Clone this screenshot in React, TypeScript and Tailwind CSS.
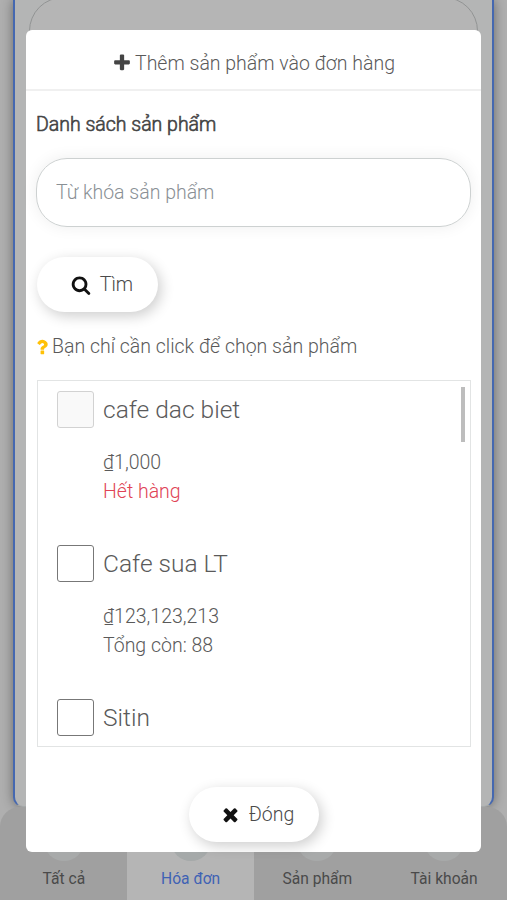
import type { ReactNode } from 'react'
import clsx from 'clsx'

const ICONS = {
  plus: 'M1600 736v192q0 40-28 68t-68 28h-416v416q0 40-28 68t-68 28h-192q-40 0-68-28t-28-68v-416h-416q-40 0-68-28t-28-68v-192q0-40 28-68t68-28h416v-416q0-40 28-68t68-28h192q40 0 68 28t28 68v416h416q40 0 68 28t28 68z',
  search:
    'M1216 832q0-185-131.500-316.500t-316.500-131.500-316.500 131.500-131.500 316.500 131.500 316.500 316.500 131.500 316.500-131.500 131.500-316.500zm512 832q0 52-38 90t-90 38q-54 0-90-38l-343-342q-179 124-399 124-143 0-273.500-55.500t-225-150-150-225-55.500-273.500 55.500-273.500 150-225 225-150 273.500-55.500 273.500 55.500 225 150 150 225 55.500 273.500q0 220-124 399l343 343q37 37 37 90z',
  times:
    'M1490 1322q0 40-28 68l-136 136q-28 28-68 28t-68-28l-294-294-294 294q-28 28-68 28t-68-28l-136-136q-28-28-28-68t28-68l294-294-294-294q-28-28-28-68t28-68l136-136q28-28 68-28t68 28l294 294 294-294q28-28 68-28t68 28l136 136q28 28 28 68t-28 68l-294 294 294 294q28 28 28 68z',
  question:
    'M1088 1256v240q0 16-12 28t-28 12h-240q-16 0-28-12t-12-28v-240q0-16 12-28t28-12h240q16 0 28 12t12 28zm316-600q0 54-15.500 101t-35 76.500-55 59.500-57.500 43.500-61 35.500q-41 23-68.500 65t-27.500 67q0 17-12 32.500t-28 15.500h-240q-15 0-25.500-18.500t-10.500-37.500v-45q0-83 65-156.500t143-108.500q59-27 84-56t25-76q0-42-46.500-74t-107.500-32q-65 0-108 29-35 25-107 115-13 16-31 16-12 0-25-8l-164-125q-13-10-15.500-25t5.500-28q160-266 464-266 80 0 161 31t146 83 106 127.500 41 158.500z',
}

function Icon({ name, className }: { name: keyof typeof ICONS; className?: string }) {
  return (
    <svg viewBox="0 0 1792 1792" fill="currentColor" className={clsx('shrink-0', className)}>
      <path d={ICONS[name]} />
    </svg>
  )
}

const products = [
  { name: 'cafe dac biet', price: '₫1,000', stock: 'Hết hàng', soldOut: true },
  { name: 'Cafe sua LT', price: '₫123,123,213', stock: 'Tổng còn: 88', soldOut: false },
  { name: 'Sitin', soldOut: false },
]

const tabs = [
  { label: 'Tất cả' },
  { label: 'Hóa đơn', active: true },
  { label: 'Sản phẩm' },
  { label: 'Tài khoản' },
]

function PillButton({ className, children }: { className?: string; children: ReactNode }) {
  return (
    <button
      className={clsx(
        'flex h-[55px] items-center justify-center rounded-full bg-white text-[19.5px] font-light text-[#4a4a4a] shadow-[3px_4px_14px_rgba(0,0,0,0.2)]',
        className
      )}
    >
      {children}
    </button>
  )
}

export default function App() {
  return (
    <div className="relative flex h-[900px] w-full flex-col overflow-hidden bg-[#afafaf] font-['Roboto',sans-serif]">
      {/* Page behind the dialog */}
      <div className="mx-[13px] h-[807px] shrink-0 rounded-b-[10px] border-x-2 border-b border-[#4568b0] border-b-[#a5a9a9] bg-[#b4b5b5] px-[14px] shadow-[0_0_12px_rgba(0,0,0,0.4)]">
        <div className="-mt-[3px] h-24 rounded-t-[34px] border border-[#929494] bg-[#b5b5b5]" />
      </div>

      {/* Bottom tabs */}
      <nav className="flex h-[93px] shrink-0 overflow-hidden rounded-t-[20px] bg-[#a0a0a0]">
        {tabs.map((tab) => (
          <div
            key={tab.label}
            className={clsx(
              'flex flex-1 flex-col items-center pl-px text-[15.6px]',
              tab.active ? 'bg-[#b5b5b5] text-[#3f62b4]' : 'text-[#4a4a4a]'
            )}
          >
            <div className={clsx('mt-[14px] h-10 w-10 rounded-full', tab.active ? 'bg-[#a5a9a9]' : 'bg-[#a8aaaa]')} />
            <span className="mt-[6px] leading-6">{tab.label}</span>
          </div>
        ))}
      </nav>

      {/* Dialog */}
      <div className="absolute inset-x-[26px] top-[30px] flex h-[822px] flex-col rounded-md bg-white text-[19.5px] font-light text-[#5a5a5a]">
        <header className="flex h-[61px] shrink-0 items-center justify-center gap-[3px] border-b-2 border-[#f0f0f0] pt-[9px]">
          <Icon name="plus" className="-mt-[3px] h-5 w-5 text-[#444]" />
          <h1>Thêm sản phẩm vào đơn hàng</h1>
        </header>

        <div className="flex flex-col px-[10px]">
          <h2 className="mt-[19px] leading-[30px] text-[#444] [-webkit-text-stroke:0.6px_#444]">Danh sách sản phẩm</h2>
          <input
            placeholder="Từ khóa sản phẩm"
            className="mt-[18px] h-[69px] w-full rounded-[31px] border border-[#cdd1d1] px-[19px] pb-px shadow-[0_0_16px_rgba(0,0,0,0.07)] placeholder:text-[#8a9095]"
          />
          <PillButton className="mt-[30px] ml-px w-[121px] gap-[9px] pl-[9px]">
            <Icon name="search" className="h-5 w-5 text-[#111]" />
            Tìm
          </PillButton>

          <p className="mt-5 flex items-center leading-[30px]">
            <Icon name="question" className="-ml-[4px] h-5 w-5 text-[#ffc107]" />
            Bạn chỉ cần click để chọn sản phẩm
          </p>

          <div className="relative mt-[18px] ml-px h-[367px] overflow-hidden border border-[#e2e4e4] pt-[10px] pl-[19px]">
            {products.map((product) => (
              <div key={product.name} className="flex h-[154px] gap-[9px]">
                <div
                  className={clsx(
                    'h-[37px] w-[37px] shrink-0 rounded-[3px] border',
                    product.soldOut ? 'border-[#d2d2d2] bg-[#f9f9f9]' : 'border-[#777] bg-white'
                  )}
                />
                <div className="leading-[29px]">
                  <div className="mb-5 text-[24.5px] leading-[37px]">{product.name}</div>
                  {product.price && <div>{product.price}</div>}
                  {product.stock && <div className={clsx(product.soldOut && 'text-[#e04355]')}>{product.stock}</div>}
                </div>
              </div>
            ))}
            <div className="absolute top-[6px] right-[5px] h-[55px] w-1 bg-[#bdbdbd]" />
          </div>

          <PillButton className="mt-[40px] w-[130px] gap-[8px] self-center pl-[7px]">
            <Icon name="times" className="h-[21px] w-[21px] text-[#111]" />
            Đóng
          </PillButton>
        </div>
      </div>
    </div>
  )
}
